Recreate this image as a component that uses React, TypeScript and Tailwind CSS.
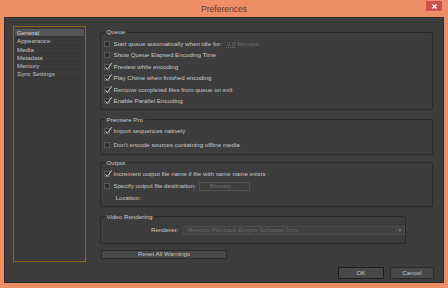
import React from "react";

const font = { fontFamily: '"Liberation Sans", Arial, sans-serif' };

function Check({ checked }: { checked?: boolean }) {
  return (
    <span className="relative ml-[2px] mr-[4px] block h-[6px] w-[6px] shrink-0 border border-[#575757] bg-[#2f2f2f]">
      {checked && (
        <svg className="absolute -left-[1px] -top-[3px] h-[9px] w-[9px]" viewBox="0 0 9 9">
          <path d="M1.5 5.2 L3.3 7.4 L7.8 1.2" fill="none" stroke="#cfcfcf" strokeWidth="1" />
        </svg>
      )}
    </span>
  );
}

function Row({ label, checked, children }: { label: string; checked?: boolean; children?: React.ReactNode }) {
  return (
    <div className="flex h-[11.5px] items-center">
      <Check checked={checked} />
      <span className="whitespace-nowrap">{label}</span>
      {children}
    </div>
  );
}

function Group({ title, className, children }: { title: string; className: string; children: React.ReactNode }) {
  return (
    <fieldset className={"rounded-[2px] border border-[#2b2b2b] pl-[0.5px] " + className}>
      <legend className="ml-[3px] px-[2px] text-[6.2px] leading-[8px] text-[#c9c9c9]">{title}</legend>
      {children}
    </fieldset>
  );
}

const sideItems = ["General", "Appearance", "Media", "Metadata", "Memory", "Sync Settings"];

export default function App() {
  return (
    <div className="flex h-[288px] w-[448px] flex-col bg-[#ee8e67] text-[6.2px] leading-[8px] text-[#c9c9c9]" style={font}>
      <div className="relative flex h-[17px] shrink-0 items-center justify-center">
        <span className="text-[8.5px] text-[#5b3b2c]">Preferences</span>
        <div className="absolute right-[6px] top-[1px] flex h-[10px] w-[16px] items-center justify-center bg-[#c9504e]">
          <svg width="5" height="5" viewBox="0 0 5 5">
            <path d="M0.5 0.5 L4.5 4.5 M4.5 0.5 L0.5 4.5" stroke="#ffffff" strokeWidth="1.2" />
          </svg>
        </div>
      </div>

      <div className="mx-[4px] flex h-[266px] shrink-0 border border-[#2e2e2e] bg-[#3d3d3d] pl-[8px]">
        {/* category list */}
        <div className="mt-[8px] h-[236px] w-[73px] shrink-0 border border-[#8a6915] bg-[#3a3a3a] px-[1px] pt-[2px]">
          {sideItems.map((s, i) => (
            <div
              key={s}
              className={
                "h-[8.3px] border-b border-[#343434] pl-[2px] leading-[8px] " +
                (i === 0 ? "bg-[#565656] text-[#d6d6d6]" : "text-[#c4c4c4]")
              }
            >
              {s}
            </div>
          ))}
        </div>

        <div className="ml-[14px] flex w-[334px] flex-col pt-[10px]">
          <Group title="Queue" className="w-[333px] pb-[1.5px] pt-[2px]">
            <Row label="Start queue automatically when idle for:">
              <span className="ml-[5px] text-[#6c6c6c] underline decoration-dotted">2.0</span>
              <span className="ml-[2px] text-[#6c6c6c]">Minutes</span>
            </Row>
            <Row label="Show Queue Elapsed Encoding Time" />
            <Row label="Preview while encoding" checked />
            <Row label="Play Chime when finished encoding" checked />
            <Row label="Remove completed files from queue on exit" checked />
            <Row label="Enable Parallel Encoding" checked />
          </Group>

          <Group title="Premiere Pro" className="mt-[6px] flex w-[333px] flex-col gap-[1.8px] pb-[3.5px] pt-[2px]">
            <Row label="Import sequences natively" checked />
            <Row label="Don't encode sources containing offline media" />
          </Group>

          <Group title="Output" className="mt-[4px] w-[333px] pb-[2.5px] pt-[1px]">
            <Row label="Increment output file name if file with same name exists" checked />
            <div className="mt-[1px]">
              <Row label="Specify output file destination:">
                <span className="ml-[3px] flex h-[9px] w-[51px] items-center border border-[#505050] pl-[10px] text-[#6c6c6c]">
                  Browse...
                </span>
              </Row>
            </div>
            <div className="flex h-[11.5px] items-center pl-[14px]">Location:</div>
          </Group>

          <Group title="Video Rendering" className="mt-[6px] w-[306px] pb-[8px] pt-[5px]">
            <div className="flex h-[9px] items-center">
              <span className="w-[77px] text-right">Renderer:</span>
              <div className="ml-[4px] flex h-[9px] w-[222px] items-center border border-[#4c4c4c] bg-[#404040] text-[#686868]">
                <span className="flex-1 pl-[4px] whitespace-nowrap">Mercury Playback Engine Software Only</span>
                <span className="flex h-full w-[8px] items-center justify-center border-l border-[#4c4c4c]">
                  <svg width="4" height="3" viewBox="0 0 4 3">
                    <path d="M0 0 H4 L2 3 Z" fill="#6a6a6a" />
                  </svg>
                </span>
              </div>
            </div>
          </Group>

          <div className="ml-[1px] mt-[6px] flex h-[9px] w-[126px] items-center justify-center border border-[#2a2a2a] bg-[#484848] text-[#c4c4c4]">
            Reset All Warnings
          </div>

          <div className="mt-[8px] flex justify-end gap-[6px]">
            <div className="flex h-[12px] w-[46px] items-center justify-center border-[1.5px] border-[#1f1f1f] bg-[#484848] text-[#c4c4c4]">
              OK
            </div>
            <div className="flex h-[12px] w-[44px] items-center justify-center border border-[#2a2a2a] bg-[#484848] text-[#c4c4c4]">
              Cancel
            </div>
          </div>
        </div>
      </div>
    </div>
  );
}
